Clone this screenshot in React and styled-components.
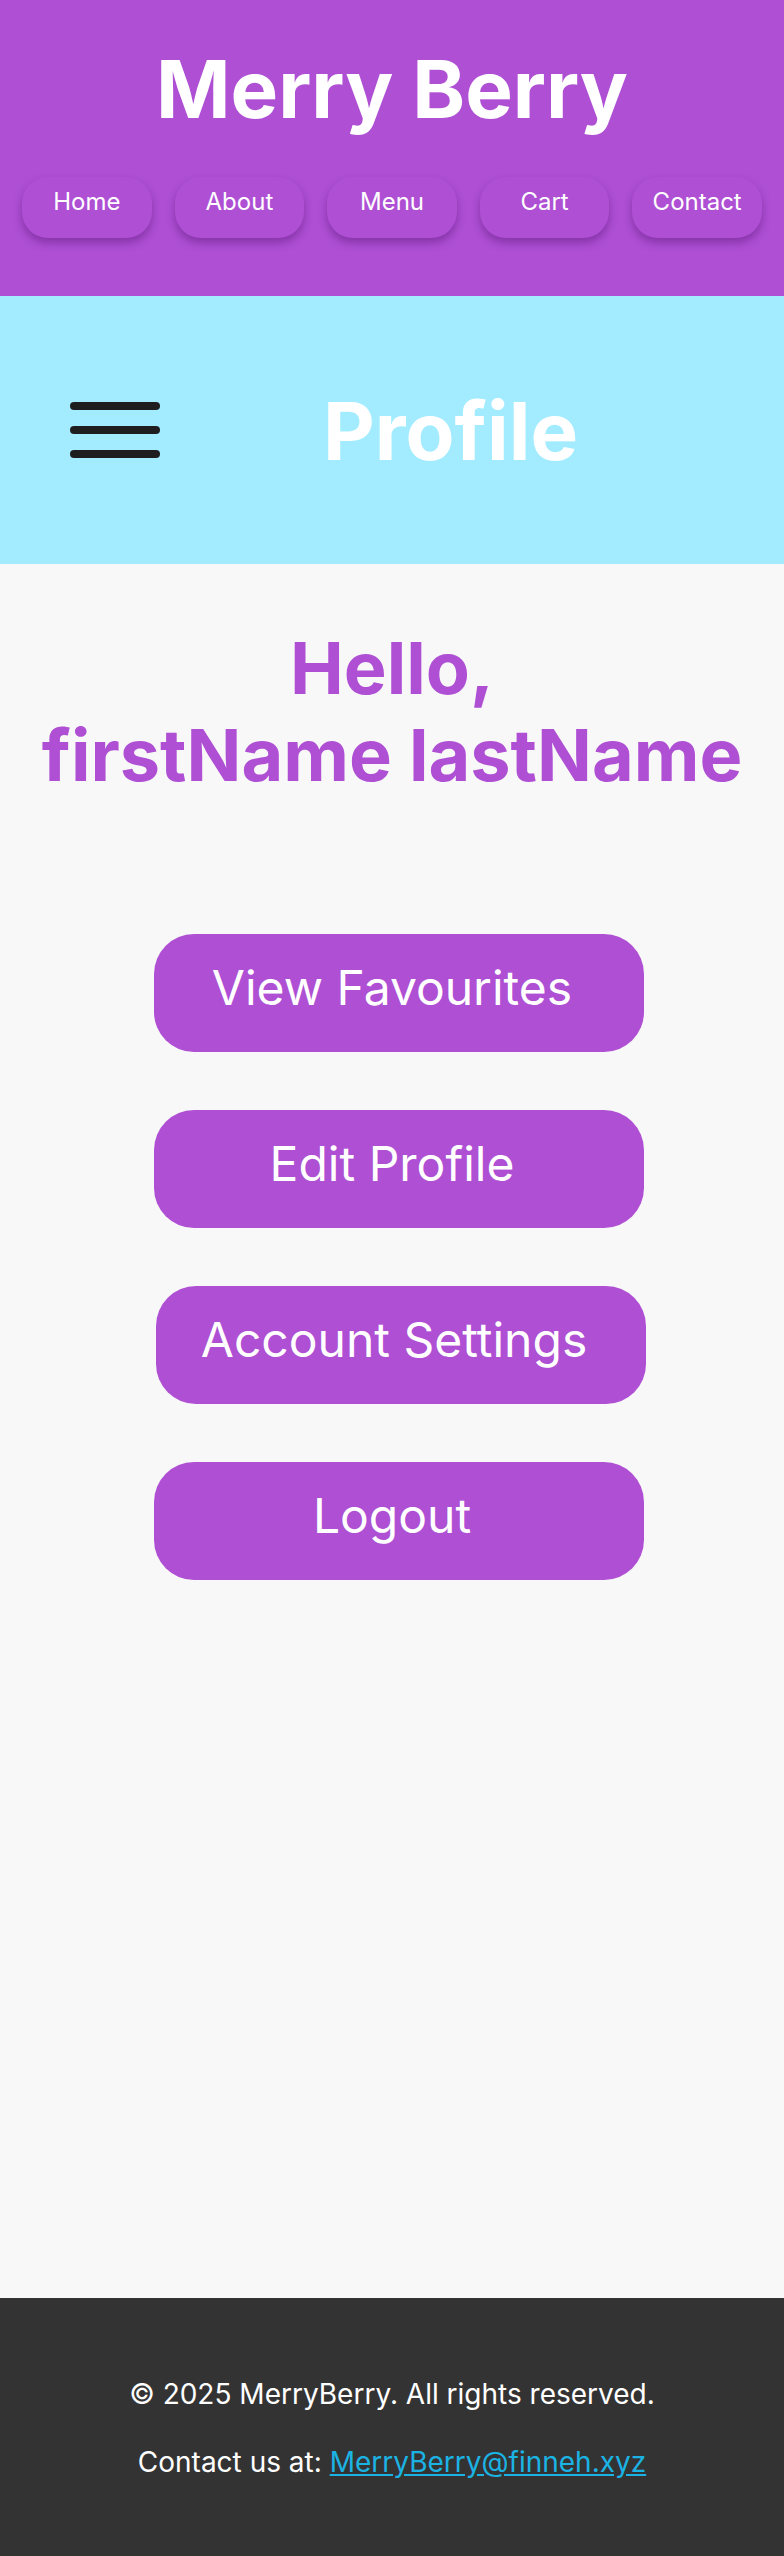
import React from "react";
import styled, { createGlobalStyle } from "styled-components";

const Global = createGlobalStyle`
  * { box-sizing: border-box; }
  html, body { margin: 0; padding: 0; }
  body {
    font-family: Inter, "Noto Sans", "Liberation Sans", sans-serif;
    background: #f8f8f8;
  }
`;

const PURPLE = "#ae4fd4";

const Header = styled.header`
  background: ${PURPLE};
  padding: 40px 22px 58px 22px;
  display: flex;
  flex-direction: column;
  align-items: center;
  gap: 40px;
`;

const SiteTitle = styled.h1`
  margin: 0;
  color: #fff;
  font-size: 80px;
  font-weight: 700;
  line-height: normal;
  text-align: center;
`;

const Nav = styled.nav`
  display: flex;
  gap: 23px;
  width: 100%;
`;

const NavButton = styled.a`
  flex: 1;
  height: 61px;
  padding-top: 10px;
  border-radius: 26px;
  background: ${PURPLE};
  color: #fff;
  font-size: 24px;
  font-weight: 400;
  line-height: normal;
  text-align: center;
  text-decoration: none;
  box-shadow: 0 5px 9px rgba(60, 0, 90, 0.35);
`;

const Banner = styled.section`
  background: #a3ecff;
  height: 268px;
  display: flex;
  align-items: center;
  padding-left: 70px;
  gap: 163px;
`;

const Burger = styled.button`
  display: flex;
  flex-direction: column;
  gap: 16px;
  background: none;
  border: none;
  padding: 0;
  width: 90px;
`;

const BurgerLine = styled.span`
  display: block;
  height: 8px;
  width: 90px;
  border-radius: 4px;
  background: #1e1e1e;
`;

const PageTitle = styled.h2`
  margin: 0;
  color: #fff;
  font-size: 80px;
  font-weight: 700;
  line-height: normal;
`;

const Main = styled.main`
  min-height: 1734px;
  background: #f8f8f8;
  display: flex;
  flex-direction: column;
  align-items: center;
  padding-top: 60px;
`;

const Greeting = styled.h3`
  margin: 0 0 136px 0;
  color: ${PURPLE};
  font-size: 72px;
  font-weight: 700;
  line-height: normal;
  text-align: center;
`;

const Actions = styled.div`
  width: 504px;
  display: flex;
  flex-direction: column;
  align-items: flex-start;
  gap: 58px;
`;

const ActionButton = styled.button`
  width: 490px;
  height: 118px;
  margin-left: ${(p) => (p.$shift ? 16 : 14)}px;
  padding: 24px 14px 36px 0;
  border: none;
  border-radius: 40px;
  background: ${PURPLE};
  color: #fff;
  font-family: inherit;
  font-size: 48px;
  font-weight: 400;
  line-height: normal;
  text-align: center;
  display: flex;
  justify-content: center;
  align-items: flex-start;
`;

const Footer = styled.footer`
  background: #333333;
  height: 258px;
  padding-top: 51px;
  color: #fff;
  text-align: center;
  font-size: 28px;
`;

const FooterLine = styled.p`
  margin: 28px 0 34px 0;
  line-height: normal;
`;

const Mail = styled.a`
  color: #1bb3e3;
  text-decoration: underline;
`;

export default function App() {
  const links = ["Home", "About", "Menu", "Cart", "Contact"];
  const actions = ["View Favourites", "Edit Profile", "Account Settings", "Logout"];
  return (
    <>
      <Global />
      <Header>
        <SiteTitle>Merry Berry</SiteTitle>
        <Nav>
          {links.map((l) => (
            <NavButton key={l} href="#">
              {l}
            </NavButton>
          ))}
        </Nav>
      </Header>
      <Banner>
        <Burger aria-label="menu">
          <BurgerLine />
          <BurgerLine />
          <BurgerLine />
        </Burger>
        <PageTitle>Profile</PageTitle>
      </Banner>
      <Main>
        <Greeting>
          Hello,
          <br />
          firstName lastName
        </Greeting>
        <Actions>
          {actions.map((a) => (
            <ActionButton key={a} $shift={a === "Account Settings"}>
              {a}
            </ActionButton>
          ))}
        </Actions>
      </Main>
      <Footer>
        <FooterLine>© 2025 MerryBerry. All rights reserved.</FooterLine>
        <FooterLine>
          Contact us at: <Mail href="#">MerryBerry@finneh.xyz</Mail>
        </FooterLine>
      </Footer>
    </>
  );
}
